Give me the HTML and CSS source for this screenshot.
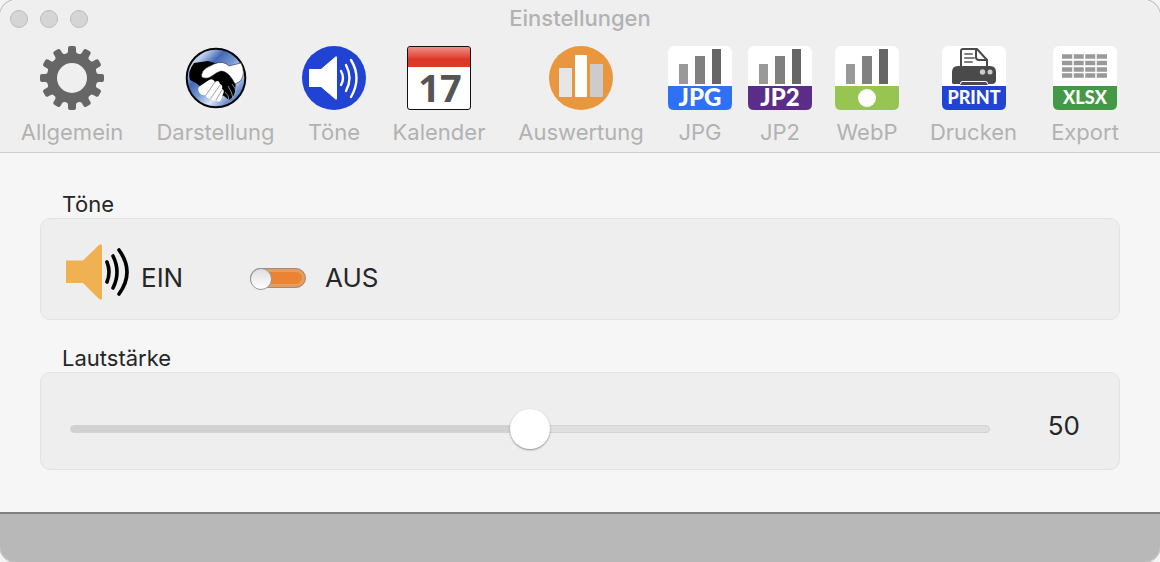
FILE: index.html
```html
<!DOCTYPE html>
<html lang="de">

<head>
    <meta charset="UTF-8">
    <meta name="viewport" content="width=device-width, initial-scale=1.0">
    <title>Einstellungen</title>
    <link rel="stylesheet" href="styles.css">
</head>

<body>
    <div class="window">
        <header>
            <div class="titlebar">
                <div class="lights">
                    <button type="button" aria-label="Schließen"></button>
                    <button type="button" aria-label="Minimieren"></button>
                    <button type="button" aria-label="Zoomen"></button>
                </div>
                <h1>Einstellungen</h1>
            </div>

            <nav class="toolbar">
                <button type="button">
                    <svg viewBox="0 0 64 64">
                        <defs>
                            <path id="tooth" d="M28 2Q28 0 30 0H34Q36 0 36 2V5Q36 8 39 8V14H25V8Q28 8 28 5Z" />
                        </defs>
                        <g fill="#666">
                            <use href="#tooth" />
                            <use href="#tooth" transform="rotate(30 32 32)" />
                            <use href="#tooth" transform="rotate(60 32 32)" />
                            <use href="#tooth" transform="rotate(90 32 32)" />
                            <use href="#tooth" transform="rotate(120 32 32)" />
                            <use href="#tooth" transform="rotate(150 32 32)" />
                            <use href="#tooth" transform="rotate(180 32 32)" />
                            <use href="#tooth" transform="rotate(210 32 32)" />
                            <use href="#tooth" transform="rotate(240 32 32)" />
                            <use href="#tooth" transform="rotate(270 32 32)" />
                            <use href="#tooth" transform="rotate(300 32 32)" />
                            <use href="#tooth" transform="rotate(330 32 32)" />
                        </g>
                        <circle cx="32" cy="32" r="20" fill="none" stroke="#666" stroke-width="10" />
                    </svg>
                    <span>Allgemein</span>
                </button>

                <button type="button">
                    <svg viewBox="0 0 64 64">
                        <defs>
                            <linearGradient id="blue" x1="0" y1="0" x2="1" y2="1">
                                <stop offset="0" stop-color="#eef3fb" />
                                <stop offset=".2" stop-color="#b9cbe9" />
                                <stop offset=".34" stop-color="#4469b4" />
                                <stop offset=".5" stop-color="#7598d2" />
                                <stop offset=".66" stop-color="#dce6f6" />
                                <stop offset=".8" stop-color="#6f91cd" />
                                <stop offset="1" stop-color="#2c56a8" />
                            </linearGradient>
                        </defs>
                        <circle cx="32" cy="32" r="29.300" fill="url(#blue)" stroke="#05070c" stroke-width="2" />
                        <path d="M10 17L24 15L34 18L43 19L52 32L51 46Q49 52 45 54L40 50L28 47L17 41L12 37L6 34Q3 26 10 17Z" fill="#000" />
                        <path d="M17.500 29Q18 25 22 22L30 18Q39 14 45 20L57 17Q62 27 56.500 35L51 38Q48 32 45 29Q41 25 37 25Q33 26 28 30Q24 33 20 32Q17 32 17.500 29Z" fill="#fff" stroke="#111" stroke-width=".5" />
                        <path d="M15 46Q13 42 16 40L25 34Q29 32 31 36Q35 33 36 38Q39 39 38 43Q41 44 39 48L37 54Q35 57 32 54Q28 56 27 52Q22 53 22 49Q17 50 15 46Z" fill="#fff" />
                        <path d="M22 49L31 36M27 52L36 39M32 54L38 44" fill="none" stroke="#888" stroke-width=".8" />
                        <path d="M41 46Q45 49 45 55M44 40Q48 46 49 52M48 38Q52 42 52 48" fill="none" stroke="#aaa" stroke-width=".8" />
                    </svg>
                    <span>Darstellung</span>
                </button>

                <button type="button">
                    <svg viewBox="0 0 64 64">
                        <circle cx="32" cy="32" r="32" fill="#2143d3" />
                        <path d="M7 23H19L33 11Q35 9 35 12V52Q35 55 33 53L19 41H7Z" fill="#fff" />
                        <path d="M39 25Q43 32 39 39M44 19Q51 32 44 45M49 14Q60 32 49 51" fill="none" stroke="#fff" stroke-width="2.400" stroke-linecap="round" />
                    </svg>
                    <span>Töne</span>
                </button>

                <button type="button">
                    <svg viewBox="0 0 64 64">
                        <defs>
                            <linearGradient id="red" x1="0" y1="0" x2="0" y2="1">
                                <stop offset="0" stop-color="#ed9086" />
                                <stop offset=".5" stop-color="#e3493c" />
                                <stop offset=".6" stop-color="#dc3827" />
                                <stop offset="1" stop-color="#df3a28" />
                            </linearGradient>
                        </defs>
                        <rect x=".5" y=".5" width="63" height="63" rx="2.500" fill="#fff" />
                        <path d="M1 21V3Q1 1 3 1H61Q63 1 63 3V21Z" fill="url(#red)" />
                        <rect x=".5" y=".5" width="63" height="63" rx="2.500" fill="none" stroke="#111" />
                        <text class="day" x="33" y="56">17</text>
                    </svg>
                    <span>Kalender</span>
                </button>

                <button type="button">
                    <svg viewBox="0 0 64 64">
                        <circle cx="32" cy="32" r="32" fill="#e8973e" />
                        <rect x="10" y="22" width="13" height="29" rx="1" fill="#e6e6e6" />
                        <rect x="26" y="9" width="12" height="42" rx="1" fill="#fff" />
                        <rect x="41" y="18" width="13" height="33" rx="1" fill="#ccc" />
                    </svg>
                    <span>Auswertung</span>
                </button>

                <button type="button">
                    <svg viewBox="0 0 64 64">
                        <defs>
                            <g id="chart">
                                <rect width="64" height="64" rx="6" fill="#fff" />
                                <rect x="11" y="18" width="9" height="20" fill="#999" />
                                <rect x="27" y="10" width="10" height="28" fill="#808080" />
                                <rect x="44" y="3" width="9" height="35" fill="#666" />
                            </g>
                            <path id="band" d="M0 40H64V58Q64 64 58 64H6Q0 64 0 58Z" />
                        </defs>
                        <use href="#chart" />
                        <use href="#band" fill="#2f70f5" />
                        <text class="big" x="32" y="60">JPG</text>
                    </svg>
                    <span>JPG</span>
                </button>

                <button type="button">
                    <svg viewBox="0 0 64 64">
                        <use href="#chart" />
                        <use href="#band" fill="#5b2d88" />
                        <text class="big" x="32" y="60">JP2</text>
                    </svg>
                    <span>JP2</span>
                </button>

                <button type="button">
                    <svg viewBox="0 0 64 64">
                        <use href="#chart" />
                        <use href="#band" fill="#98c552" />
                        <circle cx="32" cy="52" r="9" fill="#fff" />
                    </svg>
                    <span>WebP</span>
                </button>

                <button type="button">
                    <svg viewBox="0 0 64 64">
                        <rect width="64" height="64" rx="6" fill="#fff" />
                        <path d="M19 21V5Q19 3 21 3H35L45 14V21" fill="#fff" stroke="#4a4a4a" stroke-width="2" />
                        <path d="M34 3V11Q34 14 37 14H45" fill="none" stroke="#4a4a4a" stroke-width="2" />
                        <path d="M23 8H30M23 12H32M23 16H30" stroke="#808080" stroke-width="2" stroke-linecap="round" />
                        <path d="M10 37V26Q10 20 16 20H48Q54 20 54 26V34Q54 38 50 38H46Q46 35 43 35H21Q18 35 18 38H11Z" fill="#4a4a4a" />
                        <path d="M18 39L20 36H44L46 39Z" fill="#4a4a4a" />
                        <circle cx="40.500" cy="26" r="2.700" fill="#ccc" />
                        <circle cx="48" cy="26" r="2.500" fill="#ccc" />
                        <use href="#band" fill="#2143d3" />
                        <text class="small" x="32" y="58">PRINT</text>
                    </svg>
                    <span>Drucken</span>
                </button>

                <button type="button">
                    <svg viewBox="0 0 64 64">
                        <rect width="64" height="64" rx="6" fill="#fff" />
                        <path d="M9 10.500H54M9 17H54M9 23.500H54M9 29.500H54" stroke="#999" stroke-width="4.600" />
                        <path d="M20 8V33M31.500 8V33M43 8V33" stroke="#fff" stroke-width="1.500" />
                        <use href="#band" fill="#459846" />
                        <text class="small" x="32" y="58">XLSX</text>
                    </svg>
                    <span>Export</span>
                </button>
            </nav>
        </header>

        <main>
            <section>
                <h2>Töne</h2>
                <div class="box sound">
                    <svg class="speaker" viewBox="0 0 64 56">
                        <path d="M0 16.500H17L33 1Q36 -1 36 2V54Q36 57 33 55L17 39H0Z" fill="#efb151" />
                        <path d="M41 18Q45 28 41 38M47 12Q55 28 47 44M53 6Q69 28 53 50" fill="none" stroke="#000" stroke-width="3.600" stroke-linecap="round" />
                    </svg>
                    <label class="on" for="mute">EIN</label>
                    <input type="checkbox" id="mute" class="switch">
                    <label for="mute">AUS</label>
                </div>
            </section>

            <section>
                <h2><label for="volume">Lautstärke</label></h2>
                <div class="box volume">
                    <input type="range" id="volume" min="0" max="100" value="50">
                    <output for="volume">50</output>
                </div>
            </section>
        </main>

        <footer></footer>
    </div>

    <script>
        var volume = document.getElementById("volume")
        volume.addEventListener("input", (e) => {
            document.querySelector("output").innerText = e.target.value
            volume.style.setProperty("--fill", e.target.value + "%")
        })
    </script>
</body>

</html>
```
FILE: styles.css
```css
* {
    box-sizing: border-box;
}

body {
    margin: 0;
    background-color: #f3f3f3;
    font-family: Inter, "Liberation Sans", sans-serif;
    color: #262626;
}

button {
    border: 0;
    padding: 0;
    background: none;
    font: inherit;
    color: inherit;
}

.window {
    display: flex;
    flex-direction: column;
    min-height: 100vh;
    border-radius: 16px;
    overflow: hidden;
    background-color: #f6f6f6;
    box-shadow: 0 0 0 1px #bbb;
}

header {
    border-bottom: 1px solid #cecece;
    background-color: #efefef;
    color: #b2b2b2;
}

.titlebar {
    display: grid;
    grid-template-columns: 1fr auto 1fr;
    align-items: center;
    height: 38px;
    padding: 0 10px;
}

.lights {
    display: flex;
    gap: 12px;
}

.lights button {
    width: 18px;
    height: 18px;
    border: 1px solid #bcbcbc;
    border-radius: 50%;
    background-color: #d5d5d5;
}

h1 {
    margin: 0;
    padding-bottom: 2px;
    font-size: 22px;
    line-height: 36px;
    font-weight: 500;
}

.toolbar {
    display: grid;
    grid-template-columns: 144fr 143fr 94fr 116fr 168fr 70fr 90fr 84fr 129fr 94fr 28fr;
    padding: 8px 0 6px;
}

.toolbar button {
    display: flex;
    flex-direction: column;
    align-items: center;
    gap: 8px;
    font-size: 22px;
    line-height: 28px;
}

.toolbar svg {
    display: block;
    width: 64px;
    height: 64px;
    overflow: visible;
}

.toolbar text {
    fill: #fff;
    font-family: Lato, "Open Sans", sans-serif;
    font-weight: 900;
    text-anchor: middle;
}

.toolbar .big {
    font-size: 24px;
}

.toolbar .small {
    font-size: 18px;
}

.toolbar .day {
    fill: #555;
    font-family: "Open Sans", sans-serif;
    font-size: 38px;
    font-weight: 700;
}

main {
    flex: 1;
    display: flex;
    flex-direction: column;
    gap: 24px;
    padding: 37px 40px 42px;
}

h2 {
    margin: 0;
    padding-left: 22px;
    font-size: 22px;
    line-height: 28px;
    font-weight: 400;
}

.box {
    display: flex;
    align-items: center;
    border: 1px solid #e3e3e3;
    border-radius: 10px;
    background-color: #eee;
    font-size: 26px;
}

.sound {
    height: 102px;
    padding: 16px 25px 0;
}

.speaker {
    width: 64px;
    height: 56px;
    margin: 0 11px 10px 0;
}

.on {
    width: 109px;
}

.switch {
    appearance: none;
    width: 56px;
    height: 20px;
    margin: 2px 19px 0 0;
    border: 1px solid #a58c78;
    border-radius: 10px;
    background-color: #ea8433;
    box-shadow: inset 0 0 0 3px #e49d63;
}

.switch::before {
    content: "";
    display: block;
    width: 20px;
    height: 20px;
    margin: -1px;
    border: 1px solid #999;
    border-radius: 50%;
    background: linear-gradient(#dedede, #fff);
}

.switch:checked::before {
    margin-left: 35px;
}

.volume {
    height: 98px;
    padding: 0 39px 0 29px;
}

.volume input {
    --fill: 50%;
    appearance: none;
    flex: 1;
    height: 40px;
    margin: 16px 0 0;
    background: none;
}

.volume input::-webkit-slider-runnable-track {
    height: 8px;
    border: 1px solid #d2d2d2;
    border-radius: 4px;
    background: linear-gradient(to right, #d1d1d1 var(--fill), #e0e0e0 var(--fill));
}

.volume input::-webkit-slider-thumb {
    appearance: none;
    width: 40px;
    height: 40px;
    margin-top: -17px;
    border-radius: 50%;
    background-color: #fff;
    box-shadow: 0 1px 2px rgba(0, 0, 0, 0.4);
}

output {
    width: 90px;
    margin-top: 8px;
    text-align: right;
}

footer {
    height: 50px;
    border-top: 2px solid #808080;
    background-color: #b8b8b8;
}
```
